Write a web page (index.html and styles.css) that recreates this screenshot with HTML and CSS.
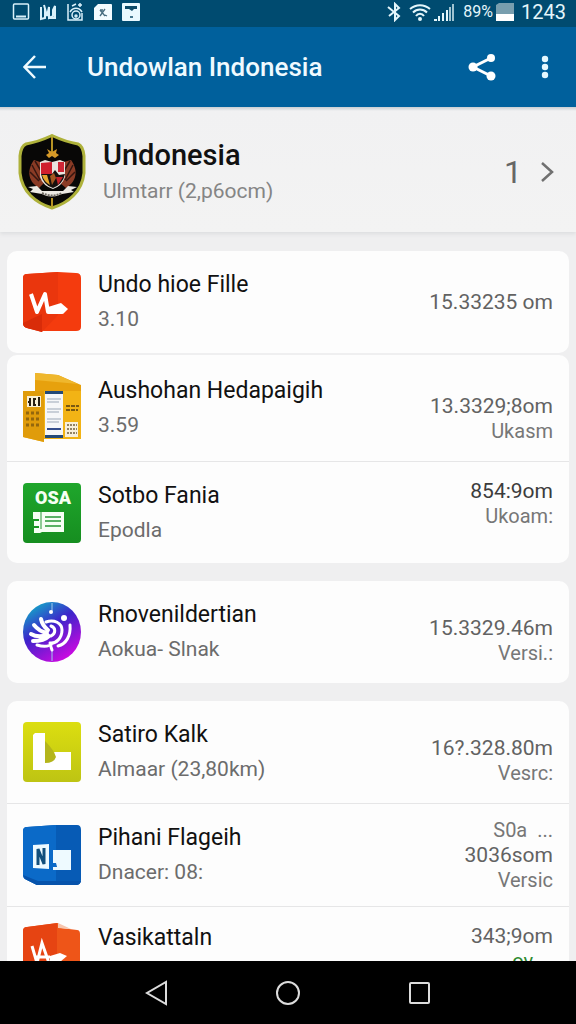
FILE: index.html
```html
<!DOCTYPE html>
<html lang="id">
<head>
  <meta charset="UTF-8" />
  <title>Undowlan Indonesia</title>
  <meta name="viewport" content="width=device-width, initial-scale=1">
  <link rel="stylesheet" href="styles.css">
</head>
<body>
  <div class="status">
    <div class="status-icons">
      <svg width="18" height="20" viewBox="0 0 18 20" fill="none" stroke="#d9f1fa" stroke-width="1.5"><rect x="1.500" y="2" width="15" height="15" rx="1"/><path d="M4 14.500h10" stroke-width="2"/></svg>
      <svg width="18" height="20" viewBox="0 0 18 20" fill="none" stroke="#d9f1fa" stroke-width="2"><path d="M2 5v12l4-1V7M5 3l3 11 2-9v11l4-2V8l2-4v12h-6"/></svg>
      <svg width="18" height="20" viewBox="0 0 18 20" fill="none" stroke="#d9f1fa" stroke-width="1.500"><path d="M2 2v16h14v-7M6 4l4-2M12 3h4M14 1v4M4 10c3-5 9-5 12 0"/><circle cx="10" cy="13" r="4"/><circle cx="10" cy="14" r="1"/></svg>
      <svg width="20" height="20" viewBox="0 0 20 20"><path d="M5 2h13q1 0 1 1v15H1V6z" fill="#f2fbff"/><path d="M7 8l5 6M12 7l-5 7M7 8h3M12 13l2 1" stroke="#476d80" stroke-width="1.300" fill="none"/></svg>
      <svg width="18" height="20" viewBox="0 0 18 20"><rect x="0" y="1" width="18" height="18" rx="1" fill="#e9f9ff"/><path d="M3 4h12v3h-3l-2 2-3-2H3z" fill="#0b4a68"/><path d="M8 15h3" stroke="#0b4a68" stroke-width="1.500"/></svg>
    </div>
    <div class="status-info">
      <svg width="16" height="20" viewBox="0 0 16 20" fill="none" stroke="#e4f6fb" stroke-width="2"><path d="M2 5l11 9-4 4V2l4 4-10 8"/></svg>
      <svg class="wifi" width="22" height="20" viewBox="0 0 22 20" fill="none" stroke="#e4f6fb" stroke-width="2"><path d="M1 7c6-5 14-5 20 0M4 10.500c4-4 10-4 14 0M7 14c2-3 6-3 8 0"/><circle cx="11" cy="17" r="1"/></svg>
      <svg width="20" height="20" viewBox="0 0 20 20" fill="#e4f6fb"><path d="M0 17h3v2H0zM4 14h2v5H4zM8 11h2v8H8zM12 8h2v11h-2z"/><path d="M15 5h2v14h-2zM18 2h2v17h-2z" opacity=".7"/></svg>
      <span class="battery-level">89%</span>
      <svg width="18" height="20" viewBox="0 0 18 20"><path d="M0 3l3-2h15v11H0z" fill="#789eae"/><path d="M0 12h18v7H0z" fill="#fff"/></svg>
      <span class="clock">1243</span>
    </div>
  </div>

  <header class="appbar">
    <button class="icon-btn" aria-label="Back">
      <svg width="24" height="24" viewBox="0 0 24 24" fill="none" stroke="#eefaff" stroke-width="2.500"><path d="M23 12H2M12 1L1.500 12 12 23"/></svg>
    </button>
    <h1>Undowlan Indonesia</h1>
    <button class="icon-btn share" aria-label="Share">
      <svg width="28" height="28" viewBox="0 0 28 28" fill="#fff"><path d="M23 5L5 14l18 9" fill="none" stroke="#fff" stroke-width="3"/><circle cx="23" cy="5" r="4"/><circle cx="5" cy="14" r="4.500"/><circle cx="23" cy="23" r="4.500"/></svg>
    </button>
    <button class="icon-btn" aria-label="More">
      <svg width="8" height="24" viewBox="0 0 8 24" fill="#e4f8ff"><circle cx="4" cy="4" r="3.200"/><circle cx="4" cy="12" r="3.200"/><circle cx="4" cy="20" r="3.200"/></svg>
    </button>
  </header>

  <main>
    <section class="summary">
      <svg class="crest" width="68" height="76" viewBox="0 0 68 76">
        <path d="M34 1.500Q48 8 60 10Q65 12 66 22V39C64 58 50 69 34 74C18 69 4 58 2 39V22Q3 12 8 10Q20 8 34 1.500z" fill="#080706" stroke="#aeb13a" stroke-width="3"/>
        <path d="M34 3v16M34 64v9" stroke="#b79324" stroke-width="2"/>
        <path d="M28 21l3-2-2-4 5 3 5-3-1 4 3 2-4 3-3-2-3 2z" fill="#d79a28"/>
        <path d="M16 26c-6 8-8 20 5 28l5-5-4-21zM53 26c6 8 8 20-5 28l-6-5 4-21z" fill="#8a3b25"/>
        <path d="M14 31l8 15M12 38l9 9M17 27l6 10M55 31l-8 15M57 38l-9 9M52 27l-6 10" stroke="#351610" stroke-width="1.500"/>
        <path d="M22 28l5-2 7 2 8-2 5 2v15q-3 9-12 12-10-3-13-12z" fill="#e9e4df"/>
        <path d="M23 29l11-1v12H23z" fill="#cf1f2e"/><path d="M40 28h6v10h-6z" fill="#cf2636"/>
        <path d="M23 40h11l3-4 4 5 6-1q-2 10-12 14-10-3-12-14z" fill="#17100e"/>
        <path d="M24 41h5l3 10q-6-3-8-10z" fill="#e4a52d"/><path d="M38 43h7l-5 8z" fill="#c3222b"/>
        <path d="M32 42l4-3 2 5-4 7z" fill="#a35621"/>
        <path d="M10 53l9-1 5 5h21l5-5 9 1-6 3 3 2-12 2q-11 5-20 0l-12-2 3-3z" fill="#ece9e3"/>
        <path d="M24 59q10 5 20 0" fill="none" stroke="#6e6962" stroke-width="2" stroke-dasharray="2 1"/>
      </svg>
      <div class="text">
        <h2>Undonesia</h2>
        <p>Ulmtarr (2,p6ocm)</p>
      </div>
      <span class="count">1</span>
      <svg class="chevron" width="14" height="22" viewBox="0 0 14 22" fill="none" stroke="#707070" stroke-width="2.500"><path d="M2 2l10 9-10 9"/></svg>
    </section>

    <div class="list">
      <ul class="card card-joined">
        <li class="row">
          <svg class="icon" width="58" height="60" viewBox="0 0 58 60">
            <path d="M4 2L35 0l18 1q5 0 5 5v49q0 4-5 4H21L4 56q-4-1-4-5V6q0-4 4-4z" fill="#f43b0e"/>
            <path d="M4 2L35 0v43L19 60 4 56q-4-1-4-5V6q0-4 4-4z" fill="#ea360d"/>
            <path d="M19 42v18L4 56q-4-1-4-5z" fill="#d92c09"/>
            <path d="M8 22l6 18 8-18 3 18h14" fill="none" stroke="#fff" stroke-width="4" stroke-linejoin="round"/><path d="M25 35l13-4 7 6-5 5-13-2z" fill="#fff"/>
          </svg>
          <div class="text">
            <h3>Undo hioe Fille</h3>
            <p>3.10</p>
          </div>
          <div class="values"><span>15.33235 om</span></div>
        </li>
      </ul>

      <ul class="card">
        <li class="row">
          <svg class="icon" width="58" height="78" viewBox="0 -2 58 78">
            <path d="M12 2l23 2 23 10v12H12z" fill="#e7a10d"/><path d="M12 2l23 2 20 9-43-4z" fill="#efb72d"/>
            <path d="M0 20h58v48H21v3L0 66z" fill="#f2b315"/><path d="M0 20h21v51L0 66z" fill="#e09c0b"/>
            <path d="M22 20h18v47H22z" fill="#f6f7f9"/><path d="M22 20h18v3H22zM22 64h18v3H22z" fill="#244a78"/>
            <path d="M24 28h14M24 31h12M24 38h14M24 41h12M24 48h14M24 51h12" stroke="#9ba7b7"/><path d="M24 58h14" stroke="#344d8b" stroke-width="2"/>
            <path d="M4 25h14v11H4z" fill="#f9efd4"/><path d="M7 27v8M5 31h3M13 28h-2v6h2M16 26v9" stroke="#281f13" stroke-width="2" fill="none"/>
            <path d="M3 42h13M3 48h13M3 54h13" stroke="#94670d" stroke-width="3" stroke-dasharray="3 2"/>
            <path d="M43 35h13M43 39h12" stroke="#795812" stroke-width="2" stroke-dasharray="4 1"/>
            <path d="M42 51h13v15H42z" fill="#f7efdb"/><path d="M44 54h10M44 58h10M44 62h10" stroke="#928264" stroke-width="2" stroke-dasharray="2 1"/>
          </svg>
          <div class="text">
            <h3>Aushohan Hedapaigih</h3>
            <p>3.59</p>
          </div>
          <div class="values values-end"><span>13.3329;8om</span><small>Ukasm</small></div>
        </li>
        <li class="row">
          <svg class="icon" width="58" height="60" viewBox="0 0 58 60">
            <defs><linearGradient id="green" x2="0" y2="1"><stop stop-color="#1fa62c"/><stop offset="1" stop-color="#168e20"/></linearGradient></defs>
            <rect width="58" height="60" rx="4" fill="url(#green)"/>
            <text class="icon-text" x="12" y="21" fill="#f5fff3">OSA</text>
            <path d="M10 29h31v20H19l-2 1h-6v-5h5v-2h-5v-5h5v-2h-6z" fill="#f6fff5"/>
            <path d="M22 34h16M22 38h16M22 43h16" stroke="#269836" stroke-width="1.500"/><path d="M18 29v17" stroke="#269836"/>
          </svg>
          <div class="text">
            <h3>Sotbo Fania</h3>
            <p>Epodla</p>
          </div>
          <div class="values values-start"><span class="dark">854:9om</span><small>Ukoam:</small></div>
        </li>
      </ul>

      <ul class="card">
        <li class="row">
          <svg class="icon" width="58" height="60" viewBox="0 0 58 60">
            <defs><linearGradient id="orb" x1="0" y1="0" x2=".6" y2="1"><stop offset=".1" stop-color="#12a9c8"/><stop offset=".5" stop-color="#3d24ca"/><stop offset="1" stop-color="#c50be0"/></linearGradient></defs>
            <ellipse cx="29" cy="30" rx="29" ry="30" fill="url(#orb)"/>
            <path d="M29 1v8M29 48v11" stroke="#9fc9ed"/>
            <g fill="none" stroke="#fff" stroke-linecap="round">
              <path d="M18 17c1 5 3 8 7 11M11 23c4 5 8 7 13 8M8 32c5 3 10 3 16 1M10 39c6 0 12-1 16-5" stroke-width="4"/>
              <path d="M23 20c8-3 16 1 16 8 0 8-6 14-12 13M28 24c5 2 5 7 0 10M14 43c6 2 12 2 16-2M47 23c1 11-4 19-12 21" stroke-width="3"/>
              <path d="M28 45l1 3" stroke-width="3"/>
            </g>
            <circle cx="28" cy="10" r="2" fill="#fff"/><circle cx="41" cy="16" r="3" fill="#fff"/>
          </svg>
          <div class="text">
            <h3>Rnovenildertian</h3>
            <p>Aokua- Slnak</p>
          </div>
          <div class="values values-end"><span>15.3329.46m</span><small>Versi.:</small></div>
        </li>
      </ul>

      <ul class="card">
        <li class="row">
          <svg class="icon" width="58" height="60" viewBox="0 0 58 60">
            <defs><linearGradient id="lime" x2="0" y2="1"><stop stop-color="#dcde10"/><stop offset="1" stop-color="#bec413"/></linearGradient></defs>
            <rect width="58" height="60" rx="4" fill="url(#lime)"/>
            <path d="M12 11h10v23l10-4h16v18H10V13z" fill="#fff"/>
            <path d="M22 19q9 9 11 16-2 6-11 6z" fill="#b4b51b"/>
          </svg>
          <div class="text">
            <h3>Satiro Kalk</h3>
            <p>Almaar (23,80km)</p>
          </div>
          <div class="values values-end"><span>16?.328.80m</span><small>Vesrc:</small></div>
        </li>
        <li class="row">
          <svg class="icon" width="58" height="60" viewBox="0 0 58 60">
            <path d="M4 2l29-2h21q4 0 4 5v50q0 5-5 5H14L2 54q-2-1-2-5V6q0-4 4-4z" fill="#075bb5"/>
            <path d="M4 2l29-2v60H14L2 54q-2-1-2-5V6q0-4 4-4z" fill="#0b6ac8"/>
            <path d="M0 50l15 6h43q-1 4-5 4H14L2 54z" fill="#0753ab"/>
            <path d="M10 20l16-1v25l-16-1zM30 25h18v20H30v-3h4l-1-4h-3z" fill="#eefaff"/>
            <path d="M15 40V24l6 15V23" fill="none" stroke="#124f7c" stroke-width="3"/>
          </svg>
          <div class="text">
            <h3>Pihani Flageih</h3>
            <p>Dnacer: 08:</p>
          </div>
          <div class="values"><small>S0a &nbsp;...</small><span>3036som</span><small>Versic</small></div>
        </li>
        <li class="row row-top">
          <svg class="icon" width="58" height="66" viewBox="0 0 58 66">
            <path d="M4 6l31-4 3 5 16 2q3 0 3 4v49H4q-4 0-4-4V10q0-4 4-4z" fill="#ee5518"/>
            <path d="M4 6l30-4v60H4q-4 0-4-4V10q0-4 4-4z" fill="#e64412"/>
            <path d="M35 2l13 6-13-1z" fill="#f7c5ad"/>
            <path d="M9 25l5 17 5-20 7 20M13 36h14" fill="none" stroke="#fff" stroke-width="3"/><path d="M27 35l10-3 7 3-7 6H27z" fill="#fff"/>
          </svg>
          <div class="text">
            <h3>Vasikattaln</h3>
          </div>
          <div class="values values-start"><span>343;9om</span><small class="new">ov &nbsp; &nbsp;</small></div>
        </li>
      </ul>
    </div>
  </main>

  <nav class="navbar">
    <button aria-label="Back"><svg width="26" height="26" viewBox="0 0 26 26"><path d="M22 2v22L3 13z"/></svg></button>
    <button aria-label="Home"><svg width="26" height="26" viewBox="0 0 26 26"><circle cx="13" cy="13" r="11"/></svg></button>
    <button aria-label="Recent apps"><svg width="26" height="26" viewBox="0 0 26 26"><rect x="4" y="3" width="19" height="20" rx="1"/></svg></button>
  </nav>
</body>
</html>
```
FILE: styles.css
```css
* {
  box-sizing: border-box;
}

body {
  margin: 0;
  height: 100vh;
  display: flex;
  flex-direction: column;
  font-family: Roboto, "Liberation Sans", sans-serif;
  background: #efeff0;
  color: #111;
}

h1, h2, h3, p, ul {
  margin: 0;
  padding: 0;
  font-weight: 400;
}

button {
  display: flex;
  padding: 0;
  border: 0;
  background: none;
}

svg {
  display: block;
  flex-shrink: 0;
}

.status {
  display: flex;
  justify-content: space-between;
  align-items: center;
  flex-shrink: 0;
  padding: 0 10px 4px 12px;
  height: 27px;
  background: #004b70;
  color: #e4f6fb;
  font-size: 20px;
}

.status-icons {
  display: flex;
  gap: 9px;
}

.status-info {
  display: flex;
  align-items: center;
  gap: 3px;
}

.wifi {
  margin-left: 4px;
}

.battery-level {
  margin-left: 6px;
  font-size: 16px;
}

.clock {
  margin-left: 4px;
}

.appbar {
  display: flex;
  align-items: center;
  flex-shrink: 0;
  height: 80px;
  padding: 0 27px 0 23px;
  background: #00609c;
  color: #effaff;
}

.appbar h1 {
  flex: 1;
  margin-left: 40px;
  font-size: 26px;
  font-weight: 500;
}

.share {
  margin-right: 45px;
}

main {
  flex: 1;
  min-height: 0;
  overflow: hidden;
}

.summary {
  display: flex;
  align-items: center;
  height: 125px;
  padding: 4px 22px 0 18px;
  background: linear-gradient(#c8cdd2, #f1f1f2 4px, #f3f3f3);
  box-shadow: 0 2px 4px #dcdddf;
}

.text {
  flex: 1;
  min-width: 0;
  white-space: nowrap;
}

.summary .text {
  margin-left: 17px;
}

.summary h2 {
  font-size: 29px;
  font-weight: 500;
  line-height: 38px;
}

.summary p {
  font-size: 21px;
  line-height: 34px;
  color: #858585;
}

.count {
  margin-right: 18px;
  font-size: 32px;
  color: #666;
}

.list {
  padding: 19px 7px;
}

.card {
  margin-bottom: 18px;
  background: #fdfdfd;
  border-radius: 10px;
  list-style: none;
}

.card-joined {
  margin-bottom: 2px;
}

.row {
  display: flex;
  align-items: center;
  gap: 17px;
  min-height: 102px;
  padding: 14px 16px;
}

.row + .row {
  border-top: 1px solid #e6e6e7;
}

.row-top {
  align-items: flex-start;
}

.row h3 {
  font-size: 23px;
  line-height: 34px;
}

.row p {
  font-size: 21px;
  line-height: 34px;
  color: #6c6c6c;
}

.icon-text {
  font-size: 18px;
  font-weight: 900;
}

.values {
  display: flex;
  flex-direction: column;
  text-align: right;
  white-space: nowrap;
}

.values-start {
  align-self: flex-start;
  padding-top: 2px;
}

.values-end {
  align-self: flex-end;
  padding-bottom: 4px;
}

.values span {
  font-size: 21px;
  line-height: 26px;
  color: #626262;
}

.values .dark {
  color: #3c3c3c;
}

.values small {
  font-size: 20px;
  line-height: 24px;
  color: #777;
}

.values .new {
  color: #2c8a2e;
}

.navbar {
  display: flex;
  justify-content: center;
  align-items: center;
  flex-shrink: 0;
  gap: 105px;
  height: 63px;
  background: #000;
}

.navbar svg {
  fill: none;
  stroke: #dcdcdc;
  stroke-width: 2;
}
```
